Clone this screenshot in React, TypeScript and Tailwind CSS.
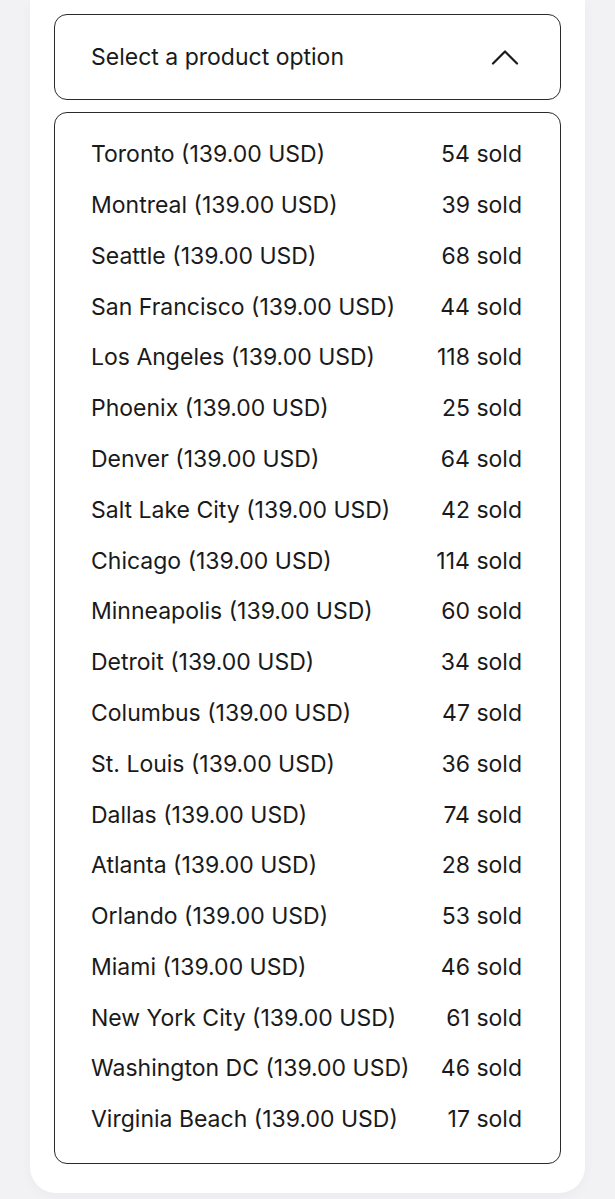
const options: [string, number][] = [
  ["Toronto", 54],
  ["Montreal", 39],
  ["Seattle", 68],
  ["San Francisco", 44],
  ["Los Angeles", 118],
  ["Phoenix", 25],
  ["Denver", 64],
  ["Salt Lake City", 42],
  ["Chicago", 114],
  ["Minneapolis", 60],
  ["Detroit", 34],
  ["Columbus", 47],
  ["St. Louis", 36],
  ["Dallas", 74],
  ["Atlanta", 28],
  ["Orlando", 53],
  ["Miami", 46],
  ["New York City", 61],
  ["Washington DC", 46],
  ["Virginia Beach", 17],
];

export default function App() {
  return (
    <div
      className="min-h-[1199px] bg-[#f2f2f4] px-[30px]"
      style={{ fontFamily: "Inter, 'Noto Sans', sans-serif" }}
    >
      <div className="bg-white rounded-b-[26px] px-[24px] pt-[14px] pb-[29px] shadow-[0_4px_12px_rgba(0,0,0,0.03)]">
        <button className="w-full h-[86px] flex items-center justify-between rounded-[13px] border border-[#2a2a2a] pl-[36px] pr-[41px] text-[23px] text-[#1a1a1a]">
          <span>Select a product option</span>
          <svg width="28" height="16" viewBox="0 0 28 16" fill="none">
            <path
              d="M2 14.5L14 2.5L26 14.5"
              stroke="#1a1a1a"
              strokeWidth="2.2"
              strokeLinecap="round"
              strokeLinejoin="round"
            />
          </svg>
        </button>
        <ul className="mt-[12px] rounded-[13px] border border-[#2a2a2a] pt-[16px] pb-[18px] pl-[36px] pr-[38px]">
          {options.map(([city, sold]) => (
            <li
              key={city}
              className="h-[50.8px] flex items-center justify-between text-[23px] text-[#1a1a1a]"
            >
              <span>{city} (139.00 USD)</span>
              <span>{sold} sold</span>
            </li>
          ))}
        </ul>
      </div>
    </div>
  );
}
